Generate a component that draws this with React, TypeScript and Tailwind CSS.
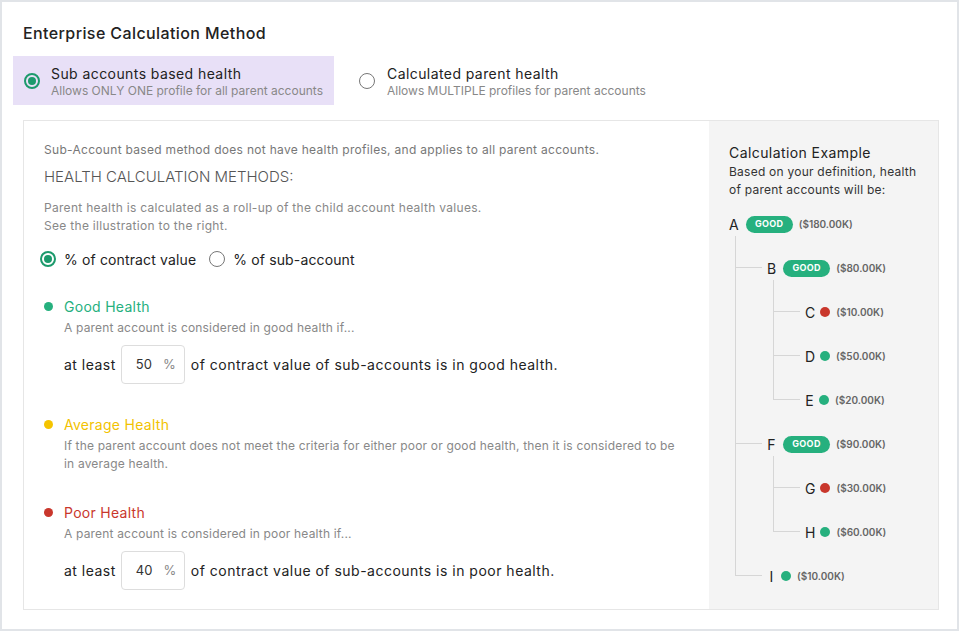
import React from "react";

type Node = {
  id: string;
  amount: string;
  status: "good" | "poor";
  badge?: boolean;
  children?: Node[];
};

const tree: Node = {
  id: "A",
  amount: "($180.00K)",
  status: "good",
  badge: true,
  children: [
    {
      id: "B",
      amount: "($80.00K)",
      status: "good",
      badge: true,
      children: [
        { id: "C", amount: "($10.00K)", status: "poor" },
        { id: "D", amount: "($50.00K)", status: "good" },
        { id: "E", amount: "($20.00K)", status: "good" },
      ],
    },
    {
      id: "F",
      amount: "($90.00K)",
      status: "good",
      badge: true,
      children: [
        { id: "G", amount: "($30.00K)", status: "poor" },
        { id: "H", amount: "($60.00K)", status: "good" },
      ],
    },
    { id: "I", amount: "($10.00K)", status: "good" },
  ],
};

const Radio = ({ checked }: { checked?: boolean }) =>
  checked ? (
    <span className="w-4 h-4 rounded-full border-2 border-[#1c9a6c] flex items-center justify-center shrink-0">
      <span className="w-2 h-2 rounded-full bg-[#1c9a6c]" />
    </span>
  ) : (
    <span className="block w-4 h-4 rounded-full border-[1.5px] border-[#777] shrink-0" />
  );

const NodeLabel = ({ node }: { node: Node }) => (
  <div className="h-6 flex items-center">
    <span className="text-[14px] text-[#222] min-w-[9px] text-center">{node.id}</span>
    {node.badge ? (
      <span className="ml-[7px] w-[47px] h-[17px] rounded-full bg-[#26b07e] text-white text-[9px] font-bold flex items-center justify-center tracking-[0.04em]">
        GOOD
      </span>
    ) : (
      <span
        className={`ml-[5px] w-[10px] h-[10px] rounded-full ${
          node.status === "good" ? "bg-[#26b07e]" : "bg-[#c9372c]"
        }`}
      />
    )}
    <span className="ml-[6px] text-[10px] font-semibold text-[#666]">{node.amount}</span>
  </div>
);

const TreeNode = ({ node }: { node: Node }) => (
  <div>
    <NodeLabel node={node} />
    {node.children && (
      <div className="ml-[6px] flex flex-col">
        {node.children.map((child, i) => {
          const last = i === node.children!.length - 1;
          return (
            <div key={child.id} className="flex">
              <div className="w-[27px] shrink-0 flex flex-col">
                <div className="h-[32px] border-l border-b border-[#d6d6d6]" />
                {!last && <div className="flex-1 border-l border-[#d6d6d6]" />}
              </div>
              <div className="pt-5 pl-[5px]">
                <TreeNode node={child} />
              </div>
            </div>
          );
        })}
      </div>
    )}
  </div>
);

const HealthRule = ({
  color,
  dot,
  title,
  desc,
  value,
  tail,
}: {
  color: string;
  dot: string;
  title: string;
  desc: string;
  value?: string;
  tail?: string;
}) => (
  <div>
    <div className="flex items-center h-5">
      <span className={`w-[9px] h-[9px] rounded-full ${dot}`} />
      <span className={`ml-[11px] text-[14px] tracking-[0.02em] ${color}`}>{title}</span>
    </div>
    <p className="ml-5 mt-[3px] text-[12px] leading-[18px] text-[#888] max-w-[620px] tracking-[0.015em]">{desc}</p>
    {value && (
      <div className="ml-5 mt-2 flex items-center text-[14px] text-[#222] tracking-[0.035em]">
        <span>at least</span>
        <div className="ml-[5px] w-16 h-[39px] border border-[#ddd] rounded bg-white flex items-center pl-[14px] text-[13px] tracking-normal">
          <span className="text-[#333]">{value}</span>
          <span className="ml-[11px] text-[#888]">%</span>
        </div>
        <span className="ml-[6px]">{tail}</span>
      </div>
    )}
  </div>
);

export default function App() {
  return (
    <div
      className="w-[959px] h-[631px] bg-white border-2 border-[#e1e4e8] pt-[19px] px-[21px]"
      style={{ fontFamily: "Inter, 'Noto Sans', sans-serif" }}
    >
      <h1 className="text-[16px] leading-6 font-medium text-[#222] tracking-[0.025em]">
        Enterprise Calculation Method
      </h1>

      <div className="mt-[11px] flex">
        <div className="-ml-[10px] w-[321px] h-[49px] bg-[#e8e0f7] flex items-center pl-[11px]">
          <Radio checked />
          <div className="ml-[11px] pt-[3px]">
            <p className="text-[14px] leading-[18px] text-[#222] tracking-[0.03em]">Sub accounts based health</p>
            <p className="text-[12px] leading-4 text-[#888]">Allows ONLY ONE profile for all parent accounts</p>
          </div>
        </div>
        <div className="ml-[14px] h-[49px] flex items-center pl-[11px]">
          <Radio />
          <div className="ml-[12px] pt-[3px]">
            <p className="text-[14px] leading-[18px] text-[#222] tracking-[0.03em]">Calculated parent health</p>
            <p className="text-[12px] leading-4 text-[#888]">Allows MULTIPLE profiles for parent accounts</p>
          </div>
        </div>
      </div>

      <div className="mt-[15px] w-[916px] h-[490px] border border-[#e6e6e6] flex">
        <div className="flex-1 pt-5 pl-5">
          <p className="text-[12px] leading-[18px] text-[#777] tracking-[0.025em]">
            Sub-Account based method does not have health profiles, and applies to all parent accounts.
          </p>
          <h2 className="mt-[7px] text-[15px] leading-[22px] text-[#555] uppercase font-light">
            Health Calculation Methods:
          </h2>
          <p className="mt-[11px] text-[12px] leading-[18px] text-[#888] tracking-[0.025em]">
            Parent health is calculated as a roll-up of the child account health values.
            <br />
            See the illustration to the right.
          </p>
          <div className="mt-[14px] flex items-center h-5 text-[14px] text-[#222] tracking-[0.01em]">
            <span className="ml-[-4px] flex">
              <Radio checked />
            </span>
            <span className="ml-2">% of contract value</span>
            <span className="ml-[13px] flex">
              <Radio />
            </span>
            <span className="ml-2">% of sub-account</span>
          </div>

          <div className="mt-[27px]">
            <HealthRule
              color="text-[#26b07e]"
              dot="bg-[#26b07e]"
              title="Good Health"
              desc="A parent account is considered in good health if..."
              value="50"
              tail="of contract value of sub-accounts is in good health."
            />
          </div>
          <div className="mt-[30px]">
            <HealthRule
              color="text-[#f2c200]"
              dot="bg-[#f5c400]"
              title="Average Health"
              desc="If the parent account does not meet the criteria for either poor or good health, then it is considered to be in average health."
            />
          </div>
          <div className="mt-[29px]">
            <HealthRule
              color="text-[#c9372c]"
              dot="bg-[#c9372c]"
              title="Poor Health"
              desc="A parent account is considered in poor health if..."
              value="40"
              tail="of contract value of sub-accounts is in poor health."
            />
          </div>
        </div>

        <div className="w-[229px] bg-[#f4f4f4] pt-[22px] pl-5 pr-2">
          <h3 className="text-[14px] leading-5 text-[#222] tracking-[0.03em]">Calculation Example</h3>
          <p className="text-[12px] leading-[18px] text-[#333] tracking-[0.02em]">
            Based on your definition, health of parent accounts will be:
          </p>
          <div className="mt-[13px]">
            <TreeNode node={tree} />
          </div>
        </div>
      </div>
    </div>
  );
}
